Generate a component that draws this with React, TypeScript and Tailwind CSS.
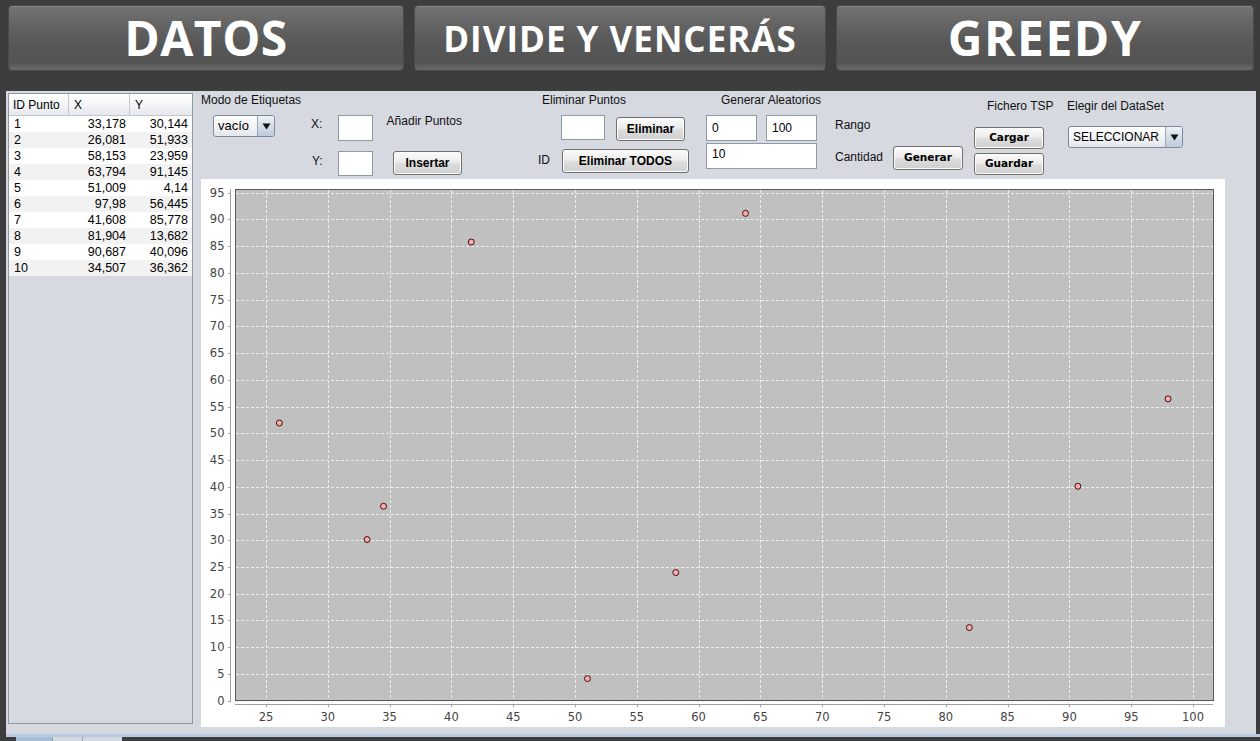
import React from "react";

const rows: [number, string, string][] = [
  [1, "33,178", "30,144"],
  [2, "26,081", "51,933"],
  [3, "58,153", "23,959"],
  [4, "63,794", "91,145"],
  [5, "51,009", "4,14"],
  [6, "97,98", "56,445"],
  [7, "41,608", "85,778"],
  [8, "81,904", "13,682"],
  [9, "90,687", "40,096"],
  [10, "34,507", "36,362"],
];

const pts = rows.map((r) => [parseFloat(r[1].replace(",", ".")), parseFloat(r[2].replace(",", "."))]);

const px = (x: number) => 65 + (x - 25) * 12.36;
const py = (y: number) => 521.7 - y * 5.347;

function TopButton({ label, w, size, track }: { label: string; w: string; size: string; track: string }) {
  return (
    <div
      className={`${w} h-[66px] rounded-[4px] border border-[#4a4a4a] bg-[linear-gradient(to_bottom,#737373,#636363_30%,#575757_60%,#535353_88%,#6a6a6a)] shadow-[inset_0_1px_0_#858585] flex items-center justify-center`}
    >
      <span
        className={`${size} ${track} font-bold text-white leading-none`}
        style={{ fontFamily: '"Open Sans", "Noto Sans", sans-serif' }}
      >
        {label}
      </span>
    </div>
  );
}

function Btn({ label, cls, dejavu }: { label: string; cls: string; dejavu?: boolean }) {
  return (
    <div
      className={`${cls} rounded-[3px] border border-[#707070] bg-[linear-gradient(to_bottom,#fbfbfb,#ececec_45%,#dcdcdc_55%,#d0d0d0)] flex items-center justify-center font-bold text-black shadow-[inset_0_0_0_1px_#fcfcfc]`}
      style={{
        fontFamily: dejavu ? '"DejaVu Sans", sans-serif' : '"Liberation Sans", Arial, sans-serif',
        fontSize: dejavu ? "10.5px" : "12px",
      }}
    >
      {label}
    </div>
  );
}

function Field({ cls, value, top }: { cls: string; value?: string; top?: boolean }) {
  return (
    <div
      className={`${cls} bg-white border border-[#8f9aa8] flex ${top ? "items-start pt-[1px]" : "items-center"} pl-[5px] text-[12px] text-black`}
    >
      {value}
    </div>
  );
}

function Combo({ cls, label, text }: { cls: string; label: string; text: string }) {
  return (
    <div
      className={`${cls} rounded-[3px] border border-[#7c8a9b] bg-[linear-gradient(to_bottom,#ffffff,#f3f4f6_50%,#e4e7ec)] flex items-stretch overflow-hidden`}
    >
      <div className={`flex-1 flex items-center pl-[4px] ${text} text-black`}>{label}</div>
      <div className="w-[17px] border-l border-[#9aa6b5] bg-[linear-gradient(to_bottom,#eef2f7,#d5dde8_50%,#bfcbda)] flex items-center justify-center">
        <svg width="9" height="7" viewBox="0 0 9 7">
          <path d="M0.5 0.5 L8.5 0.5 L4.5 6.5 Z" fill="#111" />
        </svg>
      </div>
    </div>
  );
}

function Chart() {
  const xt: number[] = [];
  for (let x = 25; x <= 100; x += 5) xt.push(x);
  const yt: number[] = [];
  for (let y = 0; y <= 95; y += 5) yt.push(y);
  return (
    <svg width="1024" height="548" viewBox="0 0 1024 548" className="block">
      <rect x="0" y="0" width="1024" height="548" fill="#ffffff" />
      <rect x="34.5" y="10.5" width="978" height="511" fill="#c0c0c0" />
      {xt.map((x) => (
        <line key={"gx" + x} x1={Math.round(px(x)) + 0.5} x2={Math.round(px(x)) + 0.5} y1={11} y2={521} stroke="#ededed" strokeWidth="1" strokeDasharray="3 2" />
      ))}
      {yt.map((y) => (
        <line key={"gy" + y} x1={35} x2={1012} y1={Math.round(py(y)) + 0.5} y2={Math.round(py(y)) + 0.5} stroke="#ededed" strokeWidth="1" strokeDasharray="3 2" />
      ))}
      <rect x="34.5" y="10.5" width="978" height="511" fill="none" stroke="#5a5a5a" strokeWidth="1" />
      {/* y axis */}
      <line x1="29.5" x2="29.5" y1="10" y2="522" stroke="#a0a0a0" />
      {yt.map((y) => (
        <g key={"ty" + y}>
          <line x1="27" x2="30" y1={Math.round(py(y)) + 0.5} y2={Math.round(py(y)) + 0.5} stroke="#a0a0a0" />
          <text x="23.5" y={py(y) + 4} textAnchor="end" fontSize="11.5" fill="#444" style={{ fontFamily: '"DejaVu Sans", sans-serif' }}>
            {y}
          </text>
        </g>
      ))}
      {/* x axis */}
      <line x1="34" x2="1012" y1="525.5" y2="525.5" stroke="#a0a0a0" />
      {xt.map((x) => (
        <g key={"tx" + x}>
          <line x1={Math.round(px(x)) + 0.5} x2={Math.round(px(x)) + 0.5} y1="525" y2="528" stroke="#a0a0a0" />
          <text x={px(x)} y="542" textAnchor="middle" fontSize="11.5" fill="#444" style={{ fontFamily: '"DejaVu Sans", sans-serif' }}>
            {x}
          </text>
        </g>
      ))}
      {pts.map(([x, y], i) => (
        <circle key={i} cx={px(x)} cy={py(y)} r="3" fill="#ffaaaa" stroke="#3a1212" strokeWidth="1" />
      ))}
    </svg>
  );
}

function Label({ children, cls }: { children: React.ReactNode; cls?: string }) {
  return <div className={`text-[12px] leading-[14px] text-[#111] whitespace-nowrap ${cls ?? ""}`}>{children}</div>;
}

export default function App() {
  return (
    <div
      className="w-[1260px] h-[741px] bg-[#3d3d3d] overflow-hidden flex flex-col"
      style={{ fontFamily: '"Liberation Sans", Arial, sans-serif' }}
    >
      {/* top buttons */}
      <div className="h-[91px] flex items-start pt-[5px] pl-[8px] gap-[10px] shrink-0">
        <TopButton label="DATOS" w="w-[396px]" size="text-[48px]" track="tracking-[0.5px]" />
        <TopButton label="DIVIDE Y VENCERÁS" w="w-[412px]" size="text-[35px]" track="tracking-[1px]" />
        <TopButton label="GREEDY" w="w-[418px]" size="text-[48px]" track="tracking-[1.5px]" />
      </div>

      {/* main panel */}
      <div className="ml-[6px] w-[1250px] h-[643px] bg-[#d6d9e0] flex shrink-0">
        {/* table */}
        <div className="ml-[2px] mt-[2px] w-[185px] h-[631px] border border-[#9196a3] bg-[#d6d9e0] flex flex-col">
          <div className="h-[22px] flex bg-[linear-gradient(to_bottom,#ffffff,#f4f5f7_50%,#e6e8ec)] border-b border-[#c3c7cf] text-[12px] text-black">
            <div className="w-[60px] border-r border-[#c3c7cf] flex items-center pl-[4px]">ID Punto</div>
            <div className="w-[61px] border-r border-[#c3c7cf] flex items-center pl-[5px]">X</div>
            <div className="flex-1 flex items-center pl-[5px]">Y</div>
          </div>
          {rows.map((r, i) => (
            <div key={r[0]} className={`h-[16px] flex text-[12.5px] leading-[16px] text-black ${i % 2 === 1 ? "bg-[#f2f2f2]" : "bg-white"}`}>
              <div className="w-[60px] pl-[5px]">{r[0]}</div>
              <div className="w-[61px] text-right pr-[4px]">{r[1]}</div>
              <div className="flex-1 text-right pr-[4px]">{r[2]}</div>
            </div>
          ))}
        </div>

        {/* right side */}
        <div className="ml-[8px] flex flex-col">
          <div className="h-[88px] flex items-start">
            {/* Group A */}
            <div className="w-[110px] flex flex-col">
              <Label cls="mt-[2px]">Modo de Etiquetas</Label>
              <Combo cls="mt-[8px] ml-[12px] w-[62px] h-[22px]" label="vacío" text="text-[13px]" />
            </div>
            {/* Group B */}
            <div className="w-[151px] flex flex-col pt-[24px]">
              <div className="flex items-start h-[26px]">
                <Label cls="w-[27px] mt-[2px]">X:</Label>
                <Field cls="w-[35px] h-[26px]" />
                <Label cls="ml-[14px] -mt-[1px]">Añadir Puntos</Label>
              </div>
              <div className="flex items-start mt-[10px]">
                <Label cls="w-[27px] pl-[1px] mt-[3px]">Y:</Label>
                <Field cls="w-[35px] h-[25px]" />
                <Btn label="Insertar" cls="ml-[20px] w-[69px] h-[24px]" />
              </div>
            </div>
            {/* Group C */}
            <div className="ml-[76px] w-[151px] flex flex-col">
              <Label cls="mt-[2px] ml-[4px]">Eliminar Puntos</Label>
              <div className="flex items-start mt-[8px] h-[26px]">
                <Field cls="ml-[23px] w-[44px] h-[25px]" />
                <Btn label="Eliminar" cls="ml-[11px] mt-[2px] w-[69px] h-[24px]" />
              </div>
              <div className="flex items-start mt-[8px]">
                <Label cls="w-[24px] mt-[4px]">ID</Label>
                <Btn label="Eliminar TODOS" cls="w-[128px] h-[24px]" />
              </div>
            </div>
            {/* Group D */}
            <div className="ml-[17px] w-[257px] flex flex-col">
              <Label cls="mt-[2px] ml-[15px]">Generar Aleatorios</Label>
              <div className="flex items-start mt-[8px] h-[26px]">
                <Field cls="w-[51px] h-[26px]" value="0" />
                <Field cls="ml-[9px] w-[51px] h-[26px]" value="100" />
                <Label cls="ml-[18px] mt-[3px]">Rango</Label>
              </div>
              <div className="flex items-start mt-[2px]">
                <Field cls="w-[111px] h-[26px]" value="10" top />
                <Label cls="ml-[18px] w-[58px] mt-[7px]">Cantidad</Label>
                <Btn label="Generar" cls="mt-[3px] w-[70px] h-[24px]" dejavu />
              </div>
            </div>
            {/* Group E */}
            <div className="ml-[11px] w-[70px] flex flex-col">
              <Label cls="mt-[8px] ml-[13px]">Fichero TSP</Label>
              <Btn label="Cargar" cls="mt-[14px] w-[70px] h-[22px]" dejavu />
              <Btn label="Guardar" cls="mt-[4px] w-[70px] h-[22px]" dejavu />
            </div>
            {/* Group F */}
            <div className="ml-[22px] flex flex-col">
              <Label cls="mt-[8px] ml-[1px]">Elegir del DataSet</Label>
              <Combo cls="mt-[13px] ml-[2px] w-[115px] h-[22px]" label="SELECCIONAR" text="text-[12px]" />
            </div>
          </div>
          <Chart />
        </div>
      </div>

      {/* bottom strip */}
      <div className="ml-[6px] h-[3px] bg-[#b8cbe0] shrink-0" />
      <div className="flex ml-[16px] h-[4px] shrink-0">
        <div className="w-[36px] bg-[#a7bcd5]" />
        <div className="w-[30px] bg-[#d5d9e0] border-l border-[#9aa0aa]" />
        <div className="w-[40px] bg-[#d5d9e0] border-l border-[#9aa0aa]" />
      </div>
    </div>
  );
}
